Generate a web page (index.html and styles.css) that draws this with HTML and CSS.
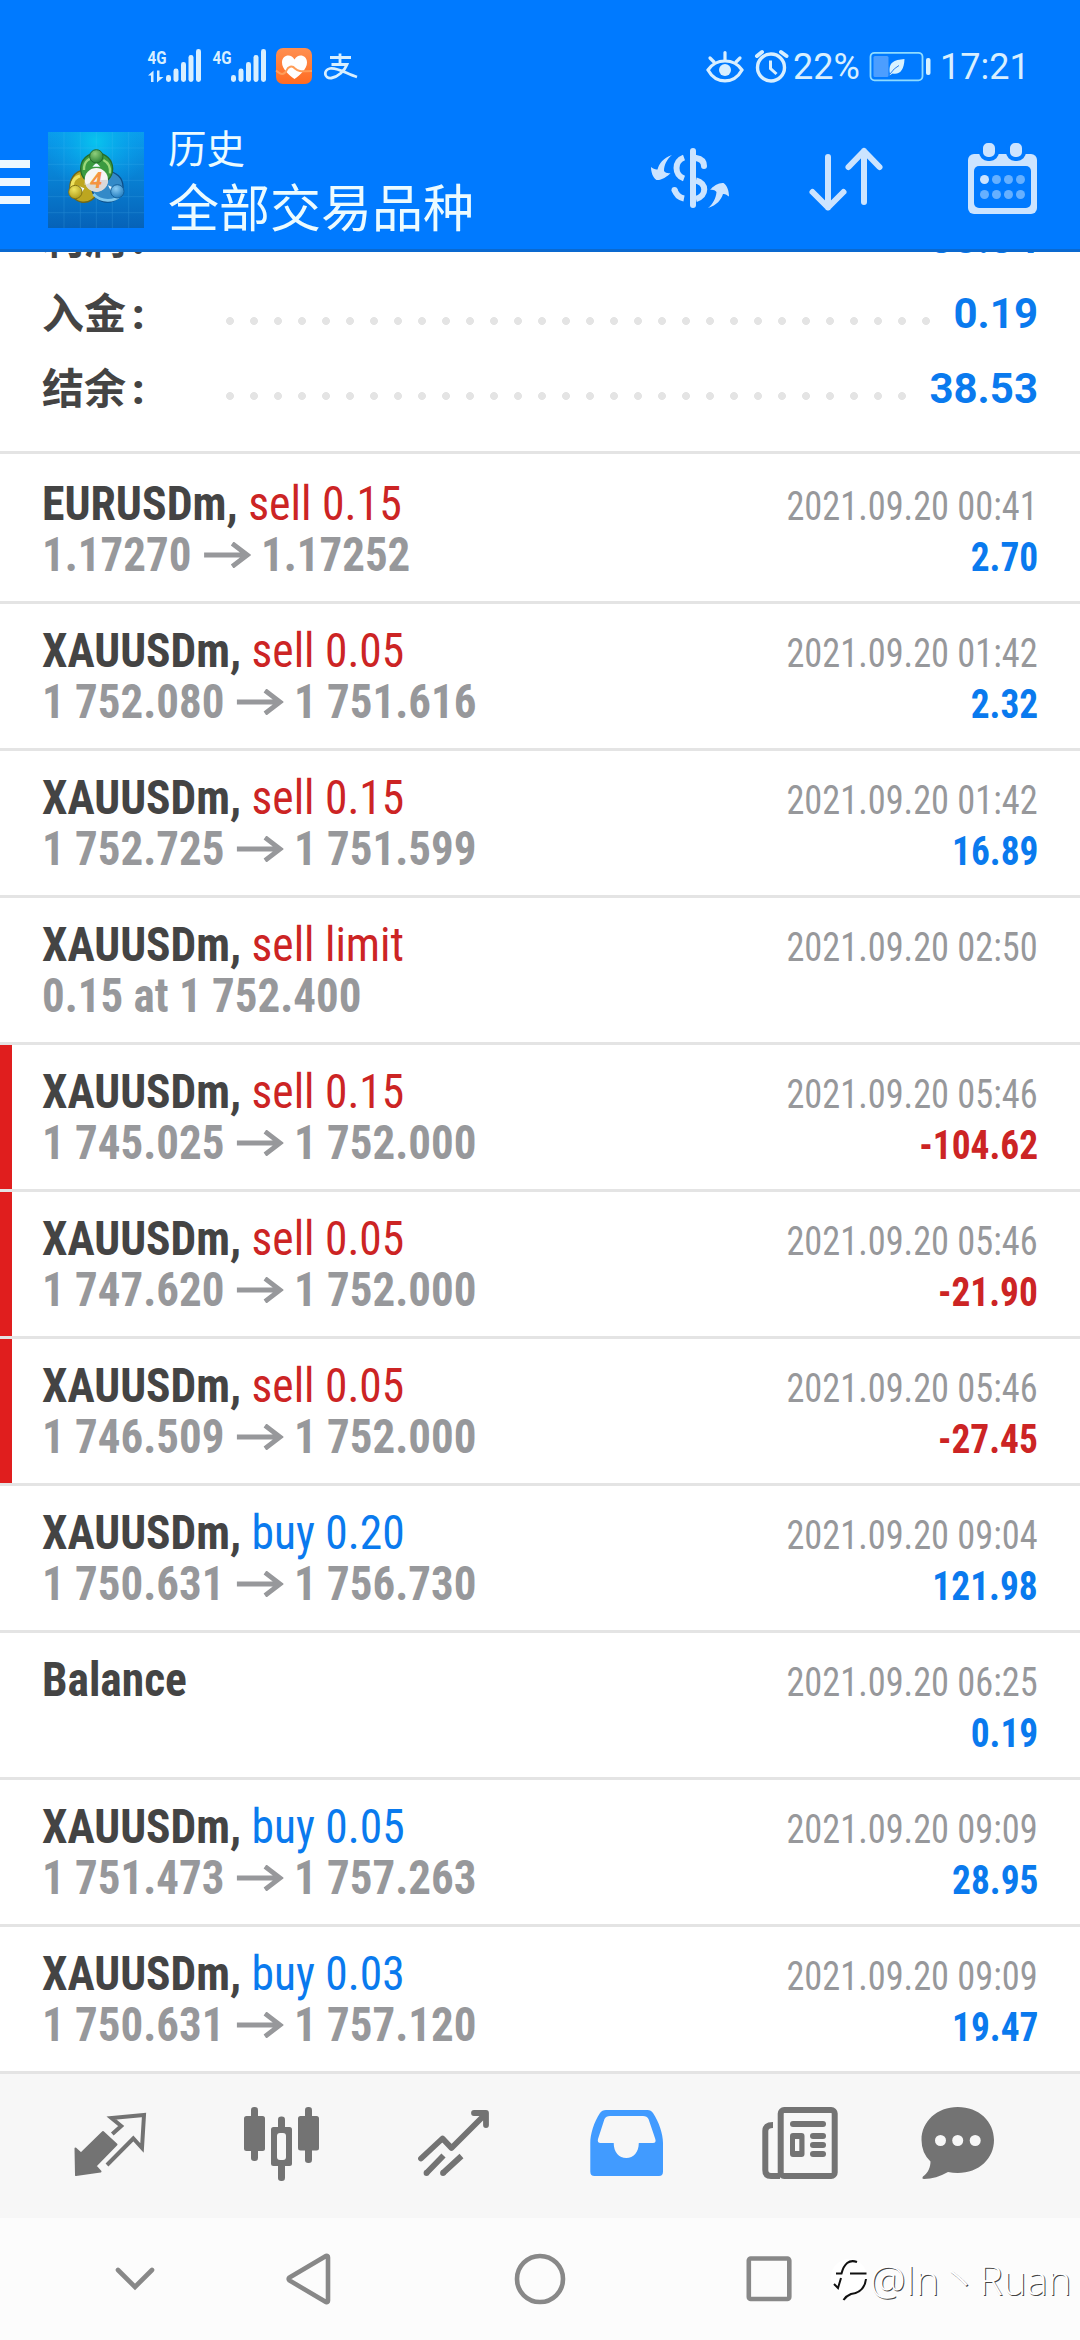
FILE: index.html
```html
<!DOCTYPE html>
<html lang="zh-CN">
<head>
<meta charset="utf-8">
<title>历史</title>
<link rel="stylesheet" href="styles.css">
</head>
<body>
<svg width="0" height="0" class="defs"><defs>
<symbol id="arrow" viewBox="0 0 52 26"><path d="M2 13H48M32 1.500L48 13L32 24.500" fill="none" stroke="#97989b" stroke-width="5"/></symbol>
<linearGradient id="sq" x1="0" y1="0" x2="0" y2="1"><stop offset="0" stop-color="#0a9cec"/><stop offset="1" stop-color="#0662b8"/></linearGradient>
<radialGradient id="glow" cx=".5" cy=".1" r=".55"><stop offset="0" stop-color="#08c4ee"/><stop offset="1" stop-color="#08a0ee" stop-opacity="0"/></radialGradient>
<radialGradient id="gg" cx=".4" cy=".3" r=".8"><stop offset="0" stop-color="#8fce7c"/><stop offset="1" stop-color="#1f7a2c"/></radialGradient>
<radialGradient id="gy" cx=".4" cy=".3" r=".8"><stop offset="0" stop-color="#f0e560"/><stop offset="1" stop-color="#a89412"/></radialGradient>
<radialGradient id="gb" cx=".4" cy=".3" r=".8"><stop offset="0" stop-color="#8accf4"/><stop offset="1" stop-color="#1673b8"/></radialGradient>
<linearGradient id="heart" x1="0" y1="0" x2="0" y2="1"><stop offset="0" stop-color="#ff8f50"/><stop offset="1" stop-color="#ff6b22"/></linearGradient>
</defs></svg>
<div class="phone">
<header class="top">
  <div class="status">
    <svg class="status-left" viewBox="130 30 250 70" width="250" height="70">
      <g fill="#d8efff">
        <text x="147.500" y="63.500" class="net" textLength="19" lengthAdjust="spacingAndGlyphs">4G</text>
        <text x="212.500" y="63.500" class="net" textLength="19" lengthAdjust="spacingAndGlyphs">4G</text>
        <path d="M148 75.500L153.500 70.500V82H151V75.500zM157 70.500H159.500V77H163.500L157 82.500z"/>
        <rect x="166" y="75" width="5" height="7" rx="2.400"/><rect x="173.500" y="68.500" width="5" height="13.500" rx="2.400"/><rect x="181" y="62" width="5" height="20" rx="2.400"/><rect x="188.500" y="55" width="5" height="27" rx="2.400"/><rect x="196" y="49" width="5" height="33" rx="2.400"/>
        <rect x="231" y="75" width="5" height="7" rx="2.400"/><rect x="238.500" y="68.500" width="5" height="13.500" rx="2.400"/><rect x="246" y="62" width="5" height="20" rx="2.400"/><rect x="253.500" y="55" width="5" height="27" rx="2.400"/><rect x="261" y="49" width="5" height="33" rx="2.400"/>
      </g>
      <rect x="276" y="48" width="36" height="36" rx="7" fill="url(#heart)"/>
      <path d="M294.500 79C289 75 282 69 282 62.500C282 55 291 53 294.500 59.500C298 53 307 55 307 62.500C307 69 300 75 294.500 79z" fill="#fff"/>
      <path d="M276 70.500C281 75 284 75 286.500 70.500C288 66.500 292 65 295 68.500C299 72.500 303 71 312 71" fill="none" stroke="#ff9d58" stroke-width="2"/>
      <g fill="none" stroke="#d8efff" stroke-width="2.800"><path d="M330 57.500H351M340 53.500V64M331.500 64.500H347C344.500 71 338 77 331.500 78C324 79 323 70 330 68.500C337 67 347 74 357 77"/></g>
    </svg>
    <div class="status-right">
      <svg viewBox="704 48 86 38" width="86" height="38" fill="none" stroke="#d8efff">
        <path d="M707 70C715 58 733 58 741 70C733 84.500 715 84.500 707 70z" stroke-width="3.200"/><circle cx="724" cy="70" r="6" fill="#d8efff" stroke="none"/>
        <path d="M724 52.500V60M709 58L713 62M739 58L735 62" stroke-width="3.200" stroke-linecap="round"/>
        <circle cx="770" cy="67.500" r="13.500" stroke-width="3.400"/><path d="M769.500 60.500V68.500L775.500 74" stroke-width="3"/><path d="M756 56L761 52M780 52L785.500 56" stroke-width="4" stroke-linecap="round"/>
      </svg>
      <span class="pct">22%</span>
      <svg viewBox="868 50 62 34" width="62" height="34"><rect x="869.500" y="52.800" width="52" height="27.500" rx="4" fill="none" stroke="#8fdcff" stroke-width="1.800"/><rect x="872.500" y="56" width="15" height="21" rx="1.500" fill="#4c9eff"/><path d="M889 74C887 62 893 60 903.500 59C903 70 899 75 891.500 73.500L888.500 75.500z" fill="#d8f2ff"/><path d="M889 74Q893 68 898 65.500" stroke="#2a80ee" fill="none"/><rect x="925" y="58" width="4.500" height="17" rx="2" fill="#d8f2ff"/></svg>
      <span class="clock">17:21</span>
    </div>
  </div>
  <div class="appbar">
    <div class="burger"><i></i><i></i><i></i></div>
    <svg class="logo" viewBox="144 66 288 288" width="96" height="96">
      <rect x="144" y="66" width="288" height="288" fill="url(#sq)"/><rect x="144" y="66" width="288" height="288" fill="url(#glow)"/>
      <path d="M192 66V354M241 66V354M289 66V354M337 66V354M386 66V354M144 114H432M144 163H432M144 211H432M144 260H432M144 308H432" stroke="#5fc6f8" stroke-width="2" opacity=".25"/>
      <ellipse cx="254" cy="228" rx="44" ry="49" transform="rotate(15 254 228)" fill="#bda620" stroke="#716818" stroke-width="4"/>
      <path d="M240 198C218 204 212 225 219 246" fill="none" stroke="#eee15c" stroke-width="10"/>
      <ellipse cx="322" cy="230" rx="47" ry="46" fill="#338ac8" stroke="#0e4d86" stroke-width="4"/>
      <path d="M280 252C305 279 344 274 359 258" fill="none" stroke="#80c9ef" stroke-width="8"/>
      <ellipse cx="290" cy="176" rx="48" ry="47" fill="#3b9a40" stroke="#246d2b" stroke-width="4"/>
      <path d="M252 180C251 151 271 144 280 145M310 150Q333 162 330 190" fill="none" stroke="#9bd87a" stroke-width="7"/>
      <path d="M277 170L289 158L301 170zM230 226L253 235L240 258zM324 226L343 234L336 250z" fill="#eefaff"/>
      <circle cx="289" cy="139" r="20" fill="url(#gg)" stroke="#246d2b" stroke-width="3"/><circle cx="226" cy="246" r="20" fill="url(#gy)" stroke="#837414" stroke-width="3"/><circle cx="352" cy="244" r="20" fill="url(#gb)" stroke="#14609c" stroke-width="3"/>
      <circle cx="289" cy="209" r="35" fill="#f6f5f4"/><path d="M254 213A35 35 0 0 0 324 209Q288 209 254 225z" fill="#d9d9d9"/>
      <text x="270" y="233" class="four">4</text>
    </svg>
    <div class="titles"><div class="t1">历史</div><div class="t2">全部交易品种</div></div>
    <div class="tools">
      <svg viewBox="650 140 80 78" width="80" height="78" fill="none" stroke="#cce4ff" stroke-width="6">
        <path d="M693 151V205" stroke-linecap="round"/><path d="M696 158C702 159 704 162 704 166" stroke-linecap="round"/><path d="M696 180.500C707 183 707 196 696 199M684 157.500C674 161 674 175 684 178.500"/><path d="M674.500 189.500C676 195 679 197.500 684 198.500" /><circle cx="674.500" cy="190" r="3" fill="#cce4ff" stroke="none"/>
        <path stroke="none" fill="#cce4ff" d="M672 155C663 158 659 164 657.500 169.500C655.500 170 653 168.500 651 167C651 172 653 178 656.500 180C661 180.500 667 177 670.500 173C668 173.500 665.500 173 664 171C664 165 667 159 672 155zM708 208C717 205 721 200 723 194C725 193.500 727 195 729 196.500C729 191 727 185 723.500 183C719 182.500 713 186 710 190C712.500 189.500 715 190 716.500 192C716 198 713 204 708 208z"/>
      </svg>
      <svg viewBox="806 140 80 78" width="80" height="78" fill="none" stroke="#cce4ff" stroke-width="6" stroke-linecap="round" stroke-linejoin="round"><path d="M828 157V207.500M812.500 192L828 207.500L843.500 192M864 202V151M848.500 167L864 151L879.500 167"/></svg>
      <svg viewBox="962 140 80 78" width="80" height="78">
        <rect x="968" y="154" width="69" height="60" rx="6" fill="#cce4ff"/><rect x="974" y="166" width="57" height="42" rx="5" fill="#007aff"/>
        <g fill="#cce4ff" stroke="#007aff" stroke-width="4"><rect x="981" y="141" width="16" height="18" rx="7"/><rect x="1008" y="141" width="16" height="18" rx="7"/></g>
        <g fill="#66b0ff"><circle cx="984.500" cy="179.500" r="4.500" fill="#cce4ff"/><circle cx="996.500" cy="179.500" r="4.500"/><circle cx="1008.500" cy="179.500" r="4.500"/><circle cx="1020.500" cy="179.500" r="4.500"/><circle cx="984.500" cy="194.500" r="4.500"/><circle cx="996.500" cy="194.500" r="4.500"/><circle cx="1008.500" cy="194.500" r="4.500"/><circle cx="1020.500" cy="194.500" r="4.500"/></g>
      </svg>
    </div>
  </div>
</header>
<section class="summary">
  <div class="sum"><span class="lab">利润<b>:</b></span><span class="dots"></span><span class="val">38.34</span></div>
  <div class="sum"><span class="lab">入金<b>:</b></span><span class="dots"></span><span class="val">0.19</span></div>
  <div class="sum"><span class="lab">结余<b>:</b></span><span class="dots"></span><span class="val">38.53</span></div>
</section>
<main class="list">
  <div class="row"><div class="line"><span class="sym">EURUSDm, <em class="sell">sell 0.15</em></span><time>2021.09.20 00:41</time></div><div class="line"><span class="px">1.17270 <svg class="ar"><use href="#arrow"/></svg> 1.17252</span><span class="pl">2.70</span></div></div>
  <div class="row"><div class="line"><span class="sym">XAUUSDm, <em class="sell">sell 0.05</em></span><time>2021.09.20 01:42</time></div><div class="line"><span class="px">1 752.080 <svg class="ar"><use href="#arrow"/></svg> 1 751.616</span><span class="pl">2.32</span></div></div>
  <div class="row"><div class="line"><span class="sym">XAUUSDm, <em class="sell">sell 0.15</em></span><time>2021.09.20 01:42</time></div><div class="line"><span class="px">1 752.725 <svg class="ar"><use href="#arrow"/></svg> 1 751.599</span><span class="pl">16.89</span></div></div>
  <div class="row"><div class="line"><span class="sym">XAUUSDm, <em class="sell">sell limit</em></span><time>2021.09.20 02:50</time></div><div class="line"><span class="px">0.15 at 1 752.400</span></div></div>
  <div class="row loss"><div class="line"><span class="sym">XAUUSDm, <em class="sell">sell 0.15</em></span><time>2021.09.20 05:46</time></div><div class="line"><span class="px">1 745.025 <svg class="ar"><use href="#arrow"/></svg> 1 752.000</span><span class="pl">-104.62</span></div></div>
  <div class="row loss"><div class="line"><span class="sym">XAUUSDm, <em class="sell">sell 0.05</em></span><time>2021.09.20 05:46</time></div><div class="line"><span class="px">1 747.620 <svg class="ar"><use href="#arrow"/></svg> 1 752.000</span><span class="pl">-21.90</span></div></div>
  <div class="row loss"><div class="line"><span class="sym">XAUUSDm, <em class="sell">sell 0.05</em></span><time>2021.09.20 05:46</time></div><div class="line"><span class="px">1 746.509 <svg class="ar"><use href="#arrow"/></svg> 1 752.000</span><span class="pl">-27.45</span></div></div>
  <div class="row"><div class="line"><span class="sym">XAUUSDm, <em class="buy">buy 0.20</em></span><time>2021.09.20 09:04</time></div><div class="line"><span class="px">1 750.631 <svg class="ar"><use href="#arrow"/></svg> 1 756.730</span><span class="pl">121.98</span></div></div>
  <div class="row"><div class="line"><span class="sym">Balance</span><time>2021.09.20 06:25</time></div><div class="line"><span class="px">&nbsp;</span><span class="pl">0.19</span></div></div>
  <div class="row"><div class="line"><span class="sym">XAUUSDm, <em class="buy">buy 0.05</em></span><time>2021.09.20 09:09</time></div><div class="line"><span class="px">1 751.473 <svg class="ar"><use href="#arrow"/></svg> 1 757.263</span><span class="pl">28.95</span></div></div>
  <div class="row"><div class="line"><span class="sym">XAUUSDm, <em class="buy">buy 0.03</em></span><time>2021.09.20 09:09</time></div><div class="line"><span class="px">1 750.631 <svg class="ar"><use href="#arrow"/></svg> 1 757.120</span><span class="pl">19.47</span></div></div>
</main>
<nav class="tabs">
  <svg viewBox="68 2104 84 84"><path fill="#737373" stroke="#737373" stroke-width="2" stroke-linejoin="round" d="M75.500 2148.500L81 2153.500L103 2132L116.500 2144.500L95.500 2166L100.500 2171.500L76 2175z"/><path fill="none" stroke="#737373" stroke-width="4" d="M112.300 2134L121.200 2126L111.500 2118L144 2115L142 2148L133.300 2138.500L107 2165"/></svg>
  <svg viewBox="240 2104 84 84" fill="#737373"><rect x="251" y="2107" width="7" height="54" rx="3.200"/><rect x="244" y="2116" width="21" height="35" rx="2.500"/><rect x="305" y="2107" width="7" height="56" rx="3.200"/><rect x="298" y="2116" width="21" height="34.500" rx="2.500"/><rect x="278" y="2116.500" width="7" height="64.500" rx="3.200"/><rect x="271" y="2127" width="21" height="39" rx="2.500"/><rect x="277" y="2133" width="9" height="27" rx="3" fill="#f7f7f7"/></svg>
  <svg viewBox="412 2104 84 84" fill="none" stroke="#737373" stroke-width="5.800" stroke-linejoin="round"><path stroke-linecap="round" d="M421 2158.500L442.500 2138.500L451.500 2148L485.500 2114M474 2113H486V2125"/><path d="M426.500 2173L443.500 2155.500M443 2173L461.500 2156"/><g fill="#737373" stroke="none"><circle cx="426.500" cy="2173" r="2.900"/><circle cx="443" cy="2173" r="2.900"/></g></svg>
  <svg viewBox="585 2104 84 84"><path fill="#419bff" fill-rule="evenodd" d="M606 2110H647.500Q651 2110 653 2113C659 2122 663 2134 663 2143V2171.500Q663 2176 659 2176H594.500Q590.300 2176 590.300 2171.500V2143C590.300 2134 594 2122 600 2113Q602 2110 606 2110zM610 2116Q606 2116 604.500 2119L598 2139Q597 2143 600.500 2143H613.700C613.700 2152 619 2158 626.300 2158C633.500 2158 638.800 2152 638.800 2143H653Q656.500 2143 655.300 2139L648.500 2119Q647 2116 643 2116z"/></svg>
  <svg viewBox="758 2104 84 84" fill="none" stroke="#737373" stroke-width="6"><rect x="780.700" y="2110" width="54" height="66" rx="3.500"/><path d="M773 2125Q765.300 2125 765.300 2131V2170Q765.300 2176 771 2176H780"/><g fill="#737373" stroke="none"><rect x="790" y="2121" width="36" height="6" rx="3"/><path fill-rule="evenodd" d="M793 2133H801.500Q804.500 2133 804.500 2136V2154Q804.500 2157 801.500 2157H793Q790 2157 790 2154V2136Q790 2133 793 2133zM795 2139V2151H799.300V2139z"/><rect x="810" y="2133" width="16" height="6" rx="3"/><rect x="810" y="2142" width="16" height="6" rx="3"/><rect x="810" y="2151" width="16" height="6" rx="3"/></g></svg>
  <svg viewBox="916 2104 84 84"><path fill="#737373" d="M957.700 2107C979 2107 994 2121.500 994 2140C994 2158.500 979 2173 957.700 2173Q953 2173 948 2172C940 2176.500 932 2179 924 2179Q921.500 2179 923 2176.500C928.500 2172.500 930.500 2167 930.500 2161.500Q921.500 2153 921.500 2140C921.500 2121.500 937 2107 957.700 2107z"/><g fill="#f7f7f7"><circle cx="940.500" cy="2140.500" r="5.500"/><circle cx="957.700" cy="2140.500" r="5.500"/><circle cx="975.200" cy="2140.500" r="5.500"/></g></svg>
</nav>
<footer class="sysnav">
  <svg viewBox="105 2249 60 60"><path d="M118 2270L135 2287L152 2270" stroke-linecap="round"/></svg>
  <svg viewBox="279 2249 60 60"><path d="M289.500 2277.500L326 2256Q328 2255.500 328 2257.500V2300.500Q328 2302.500 326 2302L289.500 2280.500Q288 2279 289.500 2277.500z"/></svg>
  <svg viewBox="510 2249 60 60"><circle cx="540" cy="2279" r="23"/></svg>
  <svg viewBox="739 2249 60 60"><rect x="748.800" y="2258.500" width="40.500" height="40.500" rx="2"/></svg>
  <div class="mark">
    <svg class="fmark" viewBox="830 2262 38 46"><circle cx="849" cy="2282" r="18" fill="#fff" stroke="none"/><path fill="none" stroke="#111" stroke-width="2" d="M836 2278.500H841.500C844 2269 849 2264 857 2267M850 2278.500H866.500M841 2283L838 2293L834 2289M866 2284C865 2293 859 2298 851 2299Q846 2301 843.500 2305"/></svg>
    <span>@In丶Ruan</span>
  </div>
</footer>
</div>
</body>
</html>
```
FILE: styles.css
```css
* { box-sizing: border-box; }
body { margin: 0; background: #fff; font-family: "Roboto", "Noto Sans CJK SC", sans-serif; }
.defs { position: absolute; }
.phone { width: 1080px; height: 2340px; display: flex; flex-direction: column; overflow: hidden; }
.top { height: 252px; flex: none; background: #007aff; border-bottom: 3px solid #0a69d0; }
.status { height: 100px; padding: 30px 0 0 130px; display: flex; }
.status-left { flex: none; }
.net { font: 700 19px "Roboto", sans-serif; }
.status-right { display: flex; align-items: center; margin-left: 325px; height: 74px; color: #d8efff; font-size: 36px; line-height: 42px; }
.pct { width: 78px; padding-left: 2px; }
.clock { margin-left: 9px; }
.appbar { display: flex; padding-top: 32px; }
.burger { width: 30px; flex: none; margin-right: 18px; padding-top: 28px; display: flex; flex-direction: column; gap: 10px; }
.burger i { height: 8px; background: #ecf8ff; }
.titles { margin-left: 24px; width: 482px; flex: none; color: #ecfbff; font-family: "Noto Sans CJK SC", sans-serif; white-space: nowrap; }
.t1 { font-size: 38.5px; line-height: 46px; margin-top: -9px; }
.t2 { font-size: 51px; line-height: 60px; margin-top: 6px; }
.logo { flex: none; }
.four { font: italic 700 66px "Roboto", sans-serif; fill: #f59342; }
.tools { display: flex; gap: 76px; padding-top: 8px; }
.tools svg { flex: none; }
.summary { height: 202px; flex: none; overflow: hidden; border-bottom: 3px solid #e4e4e4; display: flex; flex-direction: column; justify-content: flex-end; padding-bottom: 25px; background: #fff; }
.sum { height: 75px; flex: none; display: flex; align-items: center; padding: 0 42px; }
.lab { width: 180px; flex: none; color: #444; font: 700 42px/60px "Noto Sans CJK SC", sans-serif; margin-top: -2px; }
.lab b { font-family: "Roboto", sans-serif; margin-left: 6px; }
.dots { flex: 1; height: 8px; margin: 15px 0 0 4px; background: radial-gradient(circle at 4px 4px, #e4e4e4 3.600px, transparent 4.300px) 0 0 / 24px 8px repeat-x; }
.val { margin-left: 16px; color: #0a7aee; font-weight: 700; font-size: 42px; line-height: 50px; }
.list { flex: none; font-family: "Roboto Condensed", "Roboto", sans-serif; font-stretch: 75%; background: #fff; }
.row { height: 147px; padding: 17px 42px 0; border-bottom: 3px solid #e4e4e4; }
.row:first-child { height: 150px; padding-top: 20px; }
.loss { background: linear-gradient(#e01e1e, #e01e1e) 0 0 / 12px 100% no-repeat; }
.line { height: 51px; display: flex; justify-content: space-between; align-items: baseline; line-height: 60px; white-space: nowrap; }
.sym { font-size: 48px; font-weight: 700; color: #444; transform: scaleX(.947); transform-origin: 0 0; }
.row:first-child .sym { transform: scaleX(.953); }
.sym em { font-style: normal; font-weight: 400; }
.sell { color: #cc2424; }
.buy { color: #0a7aee; }
time { font-size: 40px; color: #97989b; transform: scaleX(.908); transform-origin: 100% 0; }
.px { font-size: 48px; font-weight: 700; color: #97989b; transform: scaleX(.937); transform-origin: 0 0; }
.ar { width: 52px; height: 26px; margin-bottom: 3px; }
.pl { font-size: 40px; font-weight: 700; color: #0a7aee; transform: scaleX(.935); transform-origin: 100% 0; }
.loss .pl { color: #cc2424; }
.tabs { height: 144px; flex: none; background: #f7f7f7; padding: 0 80px 0 68px; display: flex; align-items: center; gap: 88px; }
.tabs svg { width: 84px; height: 84px; flex: none; }
.tabs svg:nth-child(4), .tabs svg:nth-child(5) { margin-left: 1px; }
.tabs svg:nth-child(6) { margin-left: -14px; }
.sysnav { height: 122px; flex: none; background: #fcfcfc; padding-left: 105px; display: flex; align-items: center; }
.sysnav > svg { width: 60px; height: 60px; flex: none; fill: none; stroke: #888; stroke-width: 4.600px; margin-right: 169px; }
.sysnav > svg:nth-child(1) { margin-right: 114px; }
.sysnav > svg:nth-child(2) { margin-right: 171px; }
.sysnav > svg:nth-child(4) { margin-right: 31px; }
.mark { display: flex; align-items: center; gap: 2px; font: 300 40px/50px "Open Sans", "Noto Sans CJK SC", sans-serif; color: #fff; text-shadow: 1px 1px 0 #444; white-space: nowrap; padding-top: 2px; }
.fmark { width: 38px; height: 46px; }
```
